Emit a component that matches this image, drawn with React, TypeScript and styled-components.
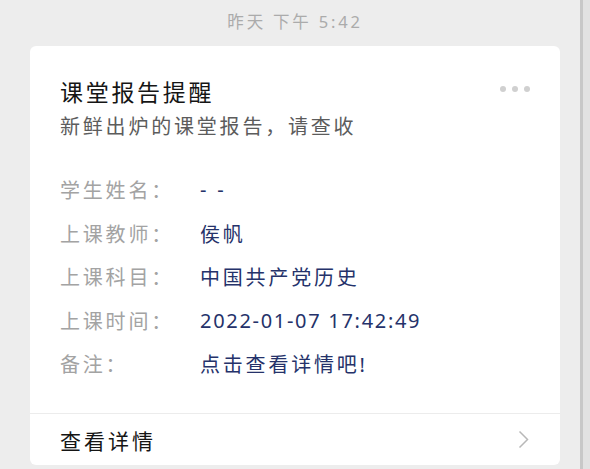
import React from "react";
import styled, { createGlobalStyle } from "styled-components";

const GlobalStyle = createGlobalStyle`
    html, body {
        margin: 0;
        padding: 0;
        background: #ededed;
    }
    body {
        font-family: "Noto Sans", "Noto Sans CJK SC", sans-serif;
    }
`;

const Page = styled.div`
    display: flex;
    height: 469px;
    overflow: hidden;
`;

const Main = styled.div`
    flex: 1;
    display: flex;
    flex-direction: column;
    padding: 0 20px 0 30px;
`;

const ScrollTrack = styled.div`
    width: 7px;
    border-left: 3px solid #c8c8c8;
    background: #e2e2e2;
`;

const Stamp = styled.div`
    height: 46px;
    display: flex;
    align-items: center;
    justify-content: center;
    padding-bottom: 4px;
    box-sizing: border-box;
    font-size: 16.5px;
    letter-spacing: 2.8px;
    color: #ababab;
`;

const Card = styled.div`
    height: 419px;
    background: #fff;
    border-radius: 6px;
    display: flex;
    flex-direction: column;
`;

const Body = styled.div`
    flex: 1;
    padding: 31px 30px 0 30px;
`;

const Header = styled.div`
    display: flex;
    justify-content: space-between;
    align-items: flex-start;
`;

const Title = styled.div`
    font-size: 23px;
    line-height: 30px;
    letter-spacing: 2.7px;
    color: #151515;
`;

const Subtitle = styled.div`
    margin-top: 7px;
    font-size: 20px;
    line-height: 26px;
    letter-spacing: 2.8px;
    color: #5c5c5c;
`;

const Dots = styled.div`
    display: flex;
    gap: 6px;
    margin-top: 9px;
`;

const Dot = styled.span`
    width: 6px;
    height: 6px;
    border-radius: 50%;
    background: #d0d0d0;
`;

const Fields = styled.div`
    margin-top: 28px;
    display: flex;
    flex-direction: column;
`;

const Row = styled.div`
    display: grid;
    grid-template-columns: 140px 1fr;
    height: 43.5px;
    align-items: center;
    font-size: 20px;
`;

const Label = styled.span`
    color: #a3a3a3;
    letter-spacing: 2.8px;
`;

const Value = styled.span<{ $latin?: boolean }>`
    color: #25326a;
    letter-spacing: ${(p) => (p.$latin ? "1.7px" : "2.8px")};
`;

const Footer = styled.div`
    height: 51px;
    border-top: 1px solid #ececec;
    display: flex;
    align-items: center;
    justify-content: space-between;
    padding: 0 31px 0 30px;
`;

const FooterText = styled.span`
    font-size: 21px;
    letter-spacing: 3px;
    color: #151515;
`;

const fields: { label: string; value: string; latin?: boolean }[] = [
    { label: "学生姓名：", value: "- -" },
    { label: "上课教师：", value: "侯帆" },
    { label: "上课科目：", value: "中国共产党历史" },
    { label: "上课时间：", value: "2022-01-07 17:42:49", latin: true },
    { label: "备注：", value: "点击查看详情吧!" },
];

export default function App() {
    return (
        <>
            <GlobalStyle />
            <Page>
                <Main>
                    <Stamp>昨天 下午 5:42</Stamp>
                    <Card>
                        <Body>
                            <Header>
                                <div>
                                    <Title>课堂报告提醒</Title>
                                    <Subtitle>新鲜出炉的课堂报告，请查收</Subtitle>
                                </div>
                                <Dots>
                                    <Dot />
                                    <Dot />
                                    <Dot />
                                </Dots>
                            </Header>
                            <Fields>
                                {fields.map((f) => (
                                    <Row key={f.label}>
                                        <Label>{f.label}</Label>
                                        <Value $latin={f.latin}>{f.value}</Value>
                                    </Row>
                                ))}
                            </Fields>
                        </Body>
                        <Footer>
                            <FooterText>查看详情</FooterText>
                            <svg width="11" height="19" viewBox="0 0 11 19">
                                <polyline
                                    points="1.5,1.5 9.5,9.5 1.5,17.5"
                                    fill="none"
                                    stroke="#b8b8b8"
                                    strokeWidth="1.5"
                                />
                            </svg>
                        </Footer>
                    </Card>
                </Main>
                <ScrollTrack />
            </Page>
        </>
    );
}
